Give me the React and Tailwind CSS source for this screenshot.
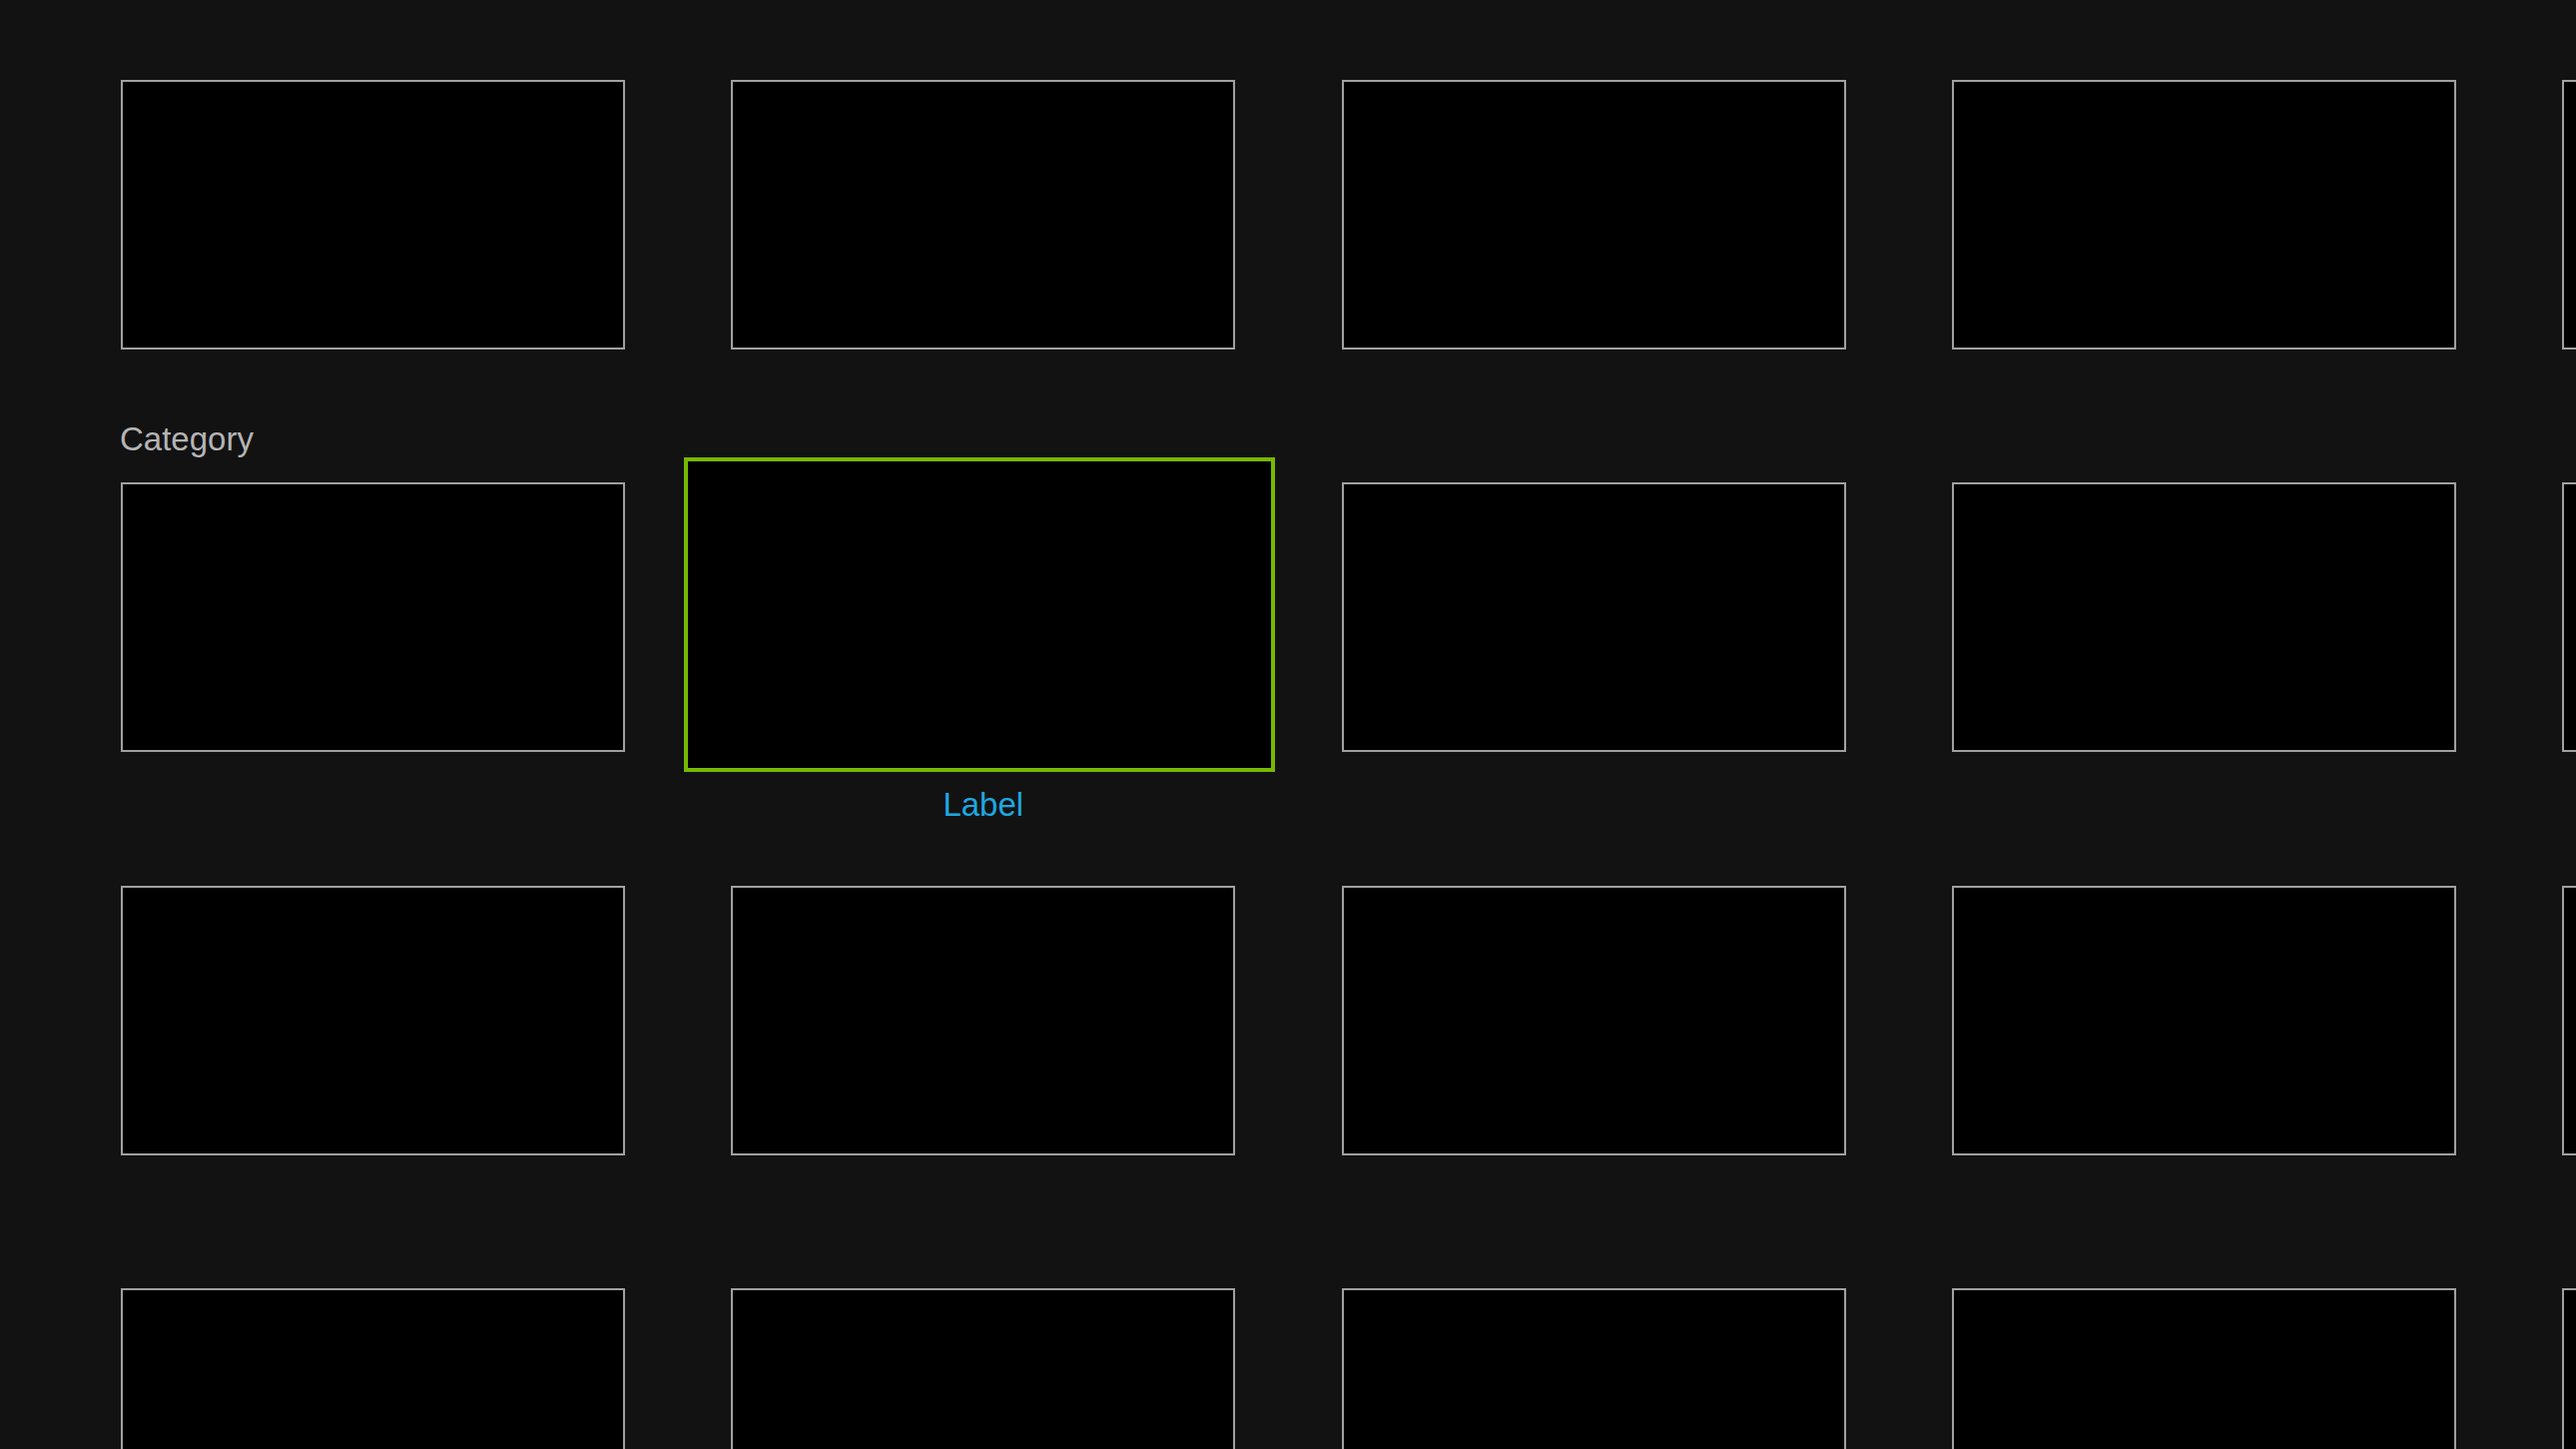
import React from "react";

function Card() {
  return <div className="w-[505px] h-[270px] shrink-0 bg-black border-2 border-[#a0a0a0]" />;
}

function Row({ focusIndex = -1 }) {
  return (
    <div className="flex gap-[106.25px]">
      {[0, 1, 2, 3, 4].map((i) =>
        i === focusIndex ? (
          <div key={i} className="relative w-[505px] h-[270px] shrink-0">
            <div className="absolute left-[-47px] top-[-25px] w-[592px] h-[315px] bg-black border-4 border-[#76b900]" />
            <div className="absolute left-0 right-0 top-[306px] text-center text-[33px] leading-[33px] text-[#1fa6e0]" style={{ fontFamily: '"Liberation Sans", Arial, sans-serif' }}>
              Label
            </div>
          </div>
        ) : (
          <Card key={i} />
        )
      )}
    </div>
  );
}

export default function App() {
  return (
    <div className="w-[2580px] h-[1451px] overflow-hidden bg-[#121212]" style={{ fontFamily: '"Liberation Sans", Arial, sans-serif' }}>
      <div className="pl-[120px] pt-[80px] flex flex-col">
        <div className="pl-px">
          <Row />
        </div>
        <div className="mt-[73px] mb-[27px] h-[33px] text-[33px] leading-[33px] text-[#b4b4b4]">Category</div>
        <div className="pl-px">
          <Row focusIndex={1} />
        </div>
        <div className="mt-[134px] pl-px">
          <Row />
        </div>
        <div className="mt-[133px] pl-px">
          <Row />
        </div>
      </div>
    </div>
  );
}
